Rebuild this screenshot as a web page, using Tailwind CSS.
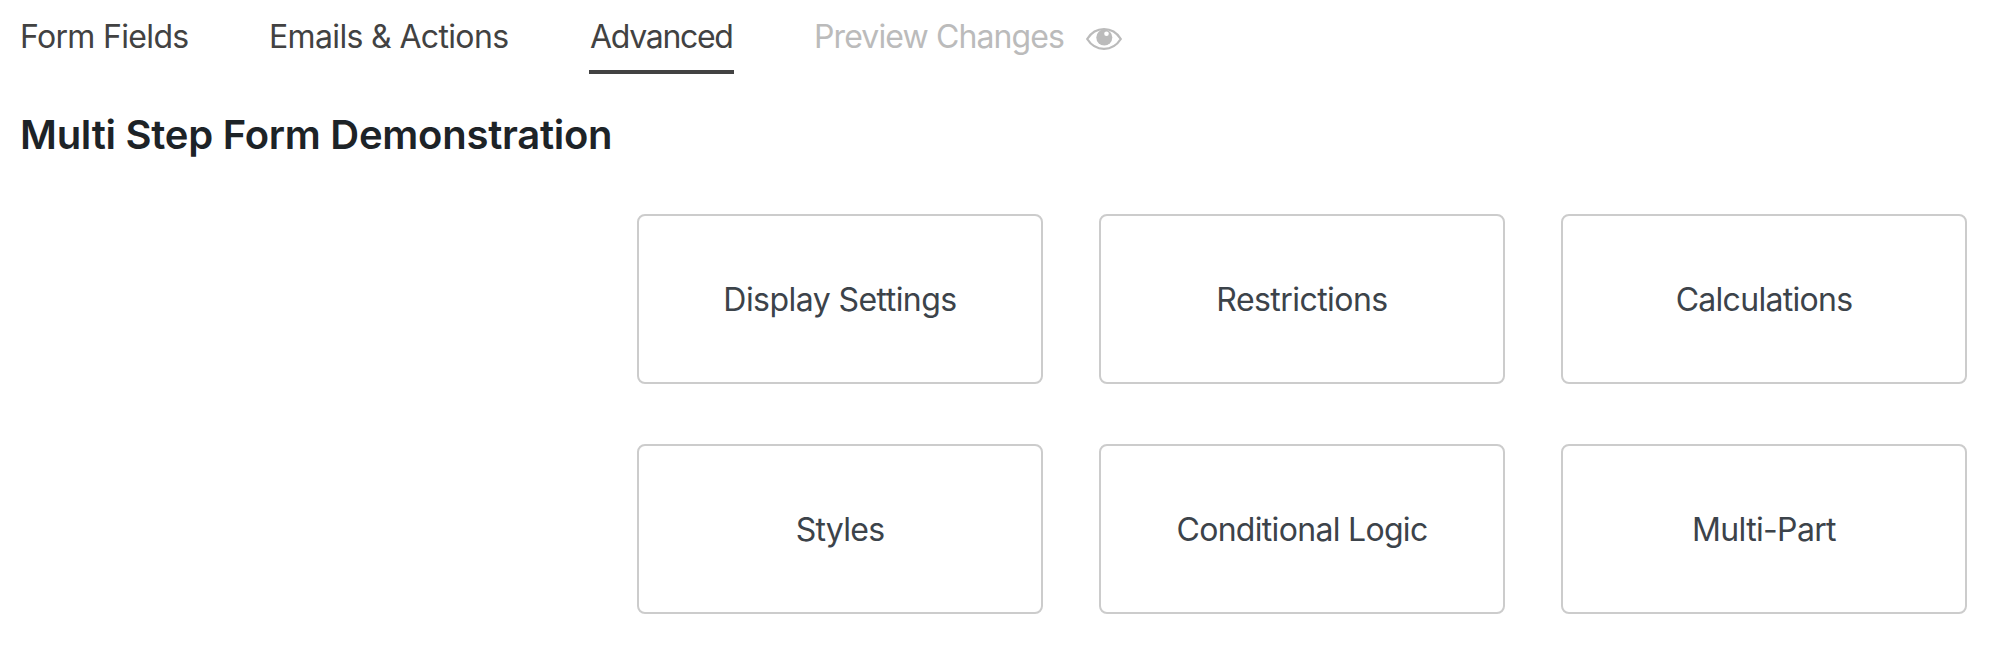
<!DOCTYPE html>
<html lang="en">
<head>
  <meta charset="UTF-8" />
  <meta name="viewport" content="width=device-width, initial-scale=1.0" />
  <title>Multi Step Form Demonstration</title>
  <script src="https://cdn.jsdelivr.net/npm/@tailwindcss/browser@4"></script>
</head>
<body class="min-h-screen bg-white font-['Inter','Liberation_Sans',sans-serif] text-[32px] leading-10 text-[#3c434a]">
  <!-- Tabs -->
  <nav class="flex gap-20 pl-5 pt-[17px] text-[#424242] whitespace-nowrap">
    <a href="#" class="w-[169px] h-[57px] tracking-[-0.67px]">Form Fields</a>
    <a href="#" class="w-60 h-[57px] tracking-[-0.65px]">Emails &amp; Actions</a>
    <a href="#" class="w-[145px] h-[57px] pl-px border-b-4 border-[#424242] tracking-[-1.3px]">Advanced</a>
    <a href="#" class="flex h-[57px] text-[#bbb] tracking-[-0.88px]">
      <span class="w-[272px]">Preview Changes</span>
      <svg class="mt-[11px] h-[22px] w-9" viewBox="0 0 36 22" fill="none">
        <path d="M1.2 11C5 5 11 1.2 18 1.2S31 5 34.8 11C31 17 25 20.8 18 20.8S5 17 1.2 11Z" stroke="currentColor" stroke-width="2.3" stroke-linejoin="round" />
        <circle cx="18.3" cy="9.5" r="8" fill="currentColor" />
        <circle cx="20.5" cy="5.8" r="2.3" fill="white" />
      </svg>
    </a>
  </nav>

  <main>
    <h1 class="mt-[37px] pl-5 text-[40px] leading-12 font-semibold tracking-[-0.26px] text-[#1d2327]">Multi Step Form Demonstration</h1>

    <!-- Settings -->
    <section class="mt-[55px] ml-[637px] grid grid-cols-[repeat(3,406px)] auto-rows-[170px] gap-x-14 gap-y-15">
      <a href="#" class="flex items-center justify-center pt-0.5 rounded-lg border-2 border-[#ccc] tracking-[-0.55px]">Display Settings</a>
      <a href="#" class="flex items-center justify-center pt-0.5 rounded-lg border-2 border-[#ccc] tracking-[-0.55px]">Restrictions</a>
      <a href="#" class="flex items-center justify-center pt-0.5 rounded-lg border-2 border-[#ccc] tracking-[-0.71px]">Calculations</a>
      <a href="#" class="flex items-center justify-center pt-0.5 rounded-lg border-2 border-[#ccc] tracking-[-0.73px]">Styles</a>
      <a href="#" class="flex items-center justify-center pt-0.5 rounded-lg border-2 border-[#ccc] tracking-[-0.69px]">Conditional Logic</a>
      <a href="#" class="flex items-center justify-center pt-0.5 rounded-lg border-2 border-[#ccc] tracking-[-0.66px]">Multi-Part</a>
    </section>
  </main>
</body>
</html>
